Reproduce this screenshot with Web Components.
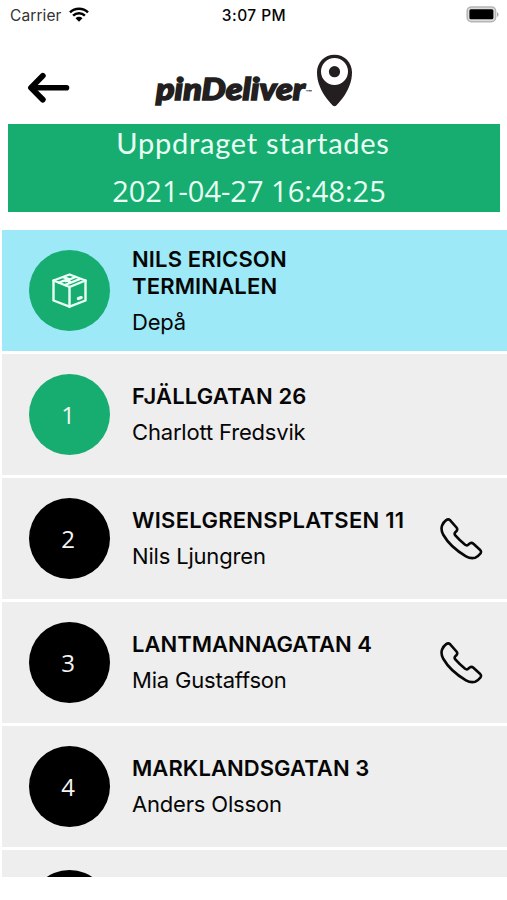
<!DOCTYPE html>
<html lang="sv">
<head>
<meta charset="utf-8">
<title>pinDeliver</title>
<style>
    body{
        margin:0;
        width:507px;
        height:900px;
        overflow:hidden;
        background:white;
        color:#060606;
        font-family:Inter, "Liberation Sans", sans-serif;
    }
</style>
</head>
<body>
<pin-app></pin-app>
<script>
class StatusBar extends HTMLElement{
    constructor(){
        super();
        this.attachShadow({ mode: "open" });
        this.shadowRoot.innerHTML = `
        <style>
            :host{
                display:grid;
                grid-template-columns:1fr auto 1fr;
                align-items:center;
                height:30px;
                padding:0 8px 0 10px;
                font-size:15.5px;
            }
            .carrier{
                display:flex;
                align-items:center;
                gap:7px;
                color:#333;
                letter-spacing:.1px;
            }
            .hora{
                font-weight:500;
                letter-spacing:.45px;
                margin-right:1px;
            }
            .bateria{
                justify-self:end;
                margin-top:-2px;
            }
            svg{
                display:block;
            }
            .carrier svg{
                margin-top:-2px;
            }
        </style>
        <div class="carrier"><span>${this.getAttribute("carrier")}</span>
            <svg width="20" height="15" viewBox="0 0 20 15">
                <g fill="none" stroke="#000" stroke-width="2.5">
                    <path d="M1 5.400A13 13 0 0 1 19 5.400"/>
                    <path d="M4.100 8.700A8.400 8.400 0 0 1 15.900 8.700"/>
                </g>
                <path d="M6.500 11.200A5 5 0 0 1 13.500 11.200L10 14.700Z"/>
            </svg>
        </div>
        <div class="hora">${this.getAttribute("time")}</div>
        <svg class="bateria" width="33" height="17" viewBox="0 0 33 17">
            <rect x="1.200" y=".9" width="28.400" height="14.800" rx="4.200" fill="#ddd" stroke="#b5b5b5" stroke-width="1.500"/>
            <rect x="3.400" y="3.300" width="24" height="10" rx="1.500"/>
            <path d="M31 6v5q1.600-.8 1.600-2.500T31 6Z" fill="#aaa"/>
        </svg>
        `
    }
}
customElements.define("status-bar",StatusBar);

class PinHeader extends HTMLElement{
    constructor(){
        super();
        this.attachShadow({ mode: "open" });
        this.shadowRoot.innerHTML = `
        <style>
            :host{
                display:flex;
                align-items:flex-start;
                height:94px;
                box-sizing:border-box;
                padding:22px 0 0 26px;
            }
            .volver{
                margin-top:20px;
            }
            .logo{
                margin-left:80px;
            }
            svg{
                display:block;
            }
            .marca{
                font:italic 900 31px Lato, sans-serif;
            }
            .tm{
                font:700 6px Inter, sans-serif;
            }
        </style>
        <svg class="volver" width="46" height="32" viewBox="0 0 46 32" fill="none" stroke="#000" stroke-linecap="round" stroke-linejoin="round">
            <path d="M40.500 15.700H6" stroke-width="5.600"/>
            <path d="M16.800 3.800L5 15.700L16.800 27.600" stroke-width="5.800"/>
        </svg>
        <svg class="logo" width="202" height="58" viewBox="0 0 202 58" fill="#231f20">
            <text class="marca" x="4" y="47.500" textLength="149" lengthAdjust="spacingAndGlyphs" stroke="#231f20" stroke-width="1.600">pinDeliver</text>
            <text class="tm" x="153.500" y="43" textLength="6.500" lengthAdjust="spacingAndGlyphs">™</text>
            <path fill-rule="evenodd" d="M182.500 2.800C192.500 2.800 200 10.500 200 20.300C200 29.500 196.800 36.500 192.800 43C189.800 47.500 186.500 51.200 184.300 53.500Q182.500 55 180.700 53.500C178.500 51.200 175.200 47.500 172.200 43C168.200 36.500 165 29.500 165 20.300C165 10.500 172.500 2.800 182.500 2.800ZM182.500 6a13.500 13.500 0 1 0 0 27a13.500 13.500 0 1 0 0-27Z"/>
            <circle cx="182.500" cy="19.700" r="5.600"/>
        </svg>
        `
    }
}
customElements.define("pin-header",PinHeader);

class MissionBanner extends HTMLElement{
    constructor(){
        super();
        this.attachShadow({ mode: "open" });
        this.shadowRoot.innerHTML = `
        <style>
            :host{
                display:block;
                height:88px;
                margin:0 7px 18px 8px;
                background:#17ad71;
                color:#e9fff3;
                font-family:Lato, sans-serif;
                font-size:29px;
                text-align:center;
            }
            .titulo{
                height:44px;
                line-height:38px;
                margin-right:2px;
                letter-spacing:.75px;
            }
            .fecha{
                height:44px;
                line-height:46px;
                margin-right:10px;
                font-family:"Open Sans", sans-serif;
            }
        </style>
        <div class="titulo"><slot name="title"></slot></div>
        <div class="fecha"><slot name="date"></slot></div>
        `
    }
}
customElements.define("mission-banner",MissionBanner);

class StopRow extends HTMLElement{
    constructor(){
        super();
        this.attachShadow({ mode: "open" });
        this.shadowRoot.innerHTML = `
        <style>
            :host{
                display:flex;
                flex:none;
                box-sizing:border-box;
                height:121px;
                padding:20px 24px 0 27px;
                background:#eee;
            }
            :host([current]){
                background:#9de9f7;
            }
            .circulo{
                flex:none;
                display:flex;
                align-items:center;
                justify-content:center;
                width:81px;
                height:81px;
                border-radius:50%;
                background:black;
                color:#f4f4f4;
                font-family:"Open Sans", sans-serif;
                font-size:24px;
            }
            .circulo span{
                margin-right:3px;
            }
            :host([done]) .circulo{
                background:#17ad71;
            }
            .texto{
                flex:1;
                padding:9px 0 0 22px;
            }
            :host([current]) .texto{
                margin-top:-13px;
            }
            .direccion{
                font-weight:600;
                font-size:22px;
                line-height:27px;
                letter-spacing:var(--espacio, .15px);
            }
            .nombre{
                margin-top:9px;
                font-size:22px;
                line-height:26px;
                letter-spacing:-.18px;
            }
            .telefono{
                flex:none;
                margin-top:19px;
            }
            svg{
                display:block;
            }
        </style>
        <div class="circulo"></div>
        <div class="texto">
            <div class="direccion"><slot name="address"></slot></div>
            <div class="nombre"><slot></slot></div>
        </div>
        `
    }
    connectedCallback(){
        this._circulo=this.shadowRoot.querySelector(".circulo");
        if(this.hasAttribute("current")){
            this._circulo.innerHTML = `
            <svg width="36" height="36" viewBox="0 0 36 36" fill="none" stroke="#eafff5" stroke-width="2.400" stroke-linejoin="round" stroke-linecap="round">
                <path d="M17.500 1.500L33.500 7.500V27.500L17.500 33.700L1.500 27.500V7.500Z"/>
                <path d="M1.500 7.500L17.500 14L33.500 7.500M17.500 14V33.700"/>
                <path d="M7 9.700L13.500 7L19 9.300M11.800 4.300L18 6.500L13.500 8.200M17.500 6.500L23.500 4M13 12L27.500 6.200"/>
                <path d="M26.400 25.600L29.200 24.600" stroke-width="3.200"/>
            </svg>`;
        }else{
            this._circulo.innerHTML = `<span>${this.getAttribute("number") || ""}</span>`;
        }
        if(this.hasAttribute("phone")){
            this.shadowRoot.querySelector(".texto").insertAdjacentHTML("afterend", `
            <svg class="telefono" width="44" height="44" viewBox="0 0 44 44" fill="none" stroke="#080808" stroke-width="2.600" stroke-linejoin="round">
                <path d="M7.200 3.100Q9.300 1.700 11.200 3.300L17.500 10.500Q18.900 12.300 17.600 14L16.200 15.400Q15 16.900 16.300 18.400Q20.700 23.400 26.100 27.800Q27.700 28.900 29.200 27.700L30.700 26.500Q32.600 25.200 34.400 26.700L41.200 33Q42.700 34.700 41.400 36.600Q39.100 39.700 36.200 40.700Q31.700 42 27 39.300Q11.400 30.300 4.100 17.500Q1.600 12.700 3.100 8.400Q4.400 5.200 7.200 3.100Z"/>
            </svg>`);
        }
    }
}
customElements.define("stop-row",StopRow);

class PinApp extends HTMLElement{
    constructor(){
        super();
        this.attachShadow({ mode: "open" });
        this.shadowRoot.innerHTML = `
        <style>
            :host{
                display:block;
            }
            .lista{
                display:flex;
                flex-direction:column;
                gap:3px;
                height:647px;
                margin-left:2px;
                overflow:hidden;
            }
        </style>
        <status-bar carrier="Carrier" time="3:07 PM"></status-bar>
        <pin-header></pin-header>
        <mission-banner>
            <span slot="title">Uppdraget startades</span>
            <span slot="date">2021-04-27 16:48:25</span>
        </mission-banner>
        <div class="lista">
            <stop-row current done><span slot="address">NILS ERICSON<br>TERMINALEN</span>Depå</stop-row>
            <stop-row number="1" done><span slot="address">FJÄLLGATAN 26</span>Charlott Fredsvik</stop-row>
            <stop-row number="2" phone style="--espacio:.28px"><span slot="address">WISELGRENSPLATSEN 11</span>Nils Ljungren</stop-row>
            <stop-row number="3" phone style="--espacio:0"><span slot="address">LANTMANNAGATAN 4</span>Mia Gustaffson</stop-row>
            <stop-row number="4" style="--espacio:.07px"><span slot="address">MARKLANDSGATAN 3</span>Anders Olsson</stop-row>
            <stop-row></stop-row>
        </div>
        `
    }
}
customElements.define("pin-app",PinApp);
</script>
</body>
</html>
